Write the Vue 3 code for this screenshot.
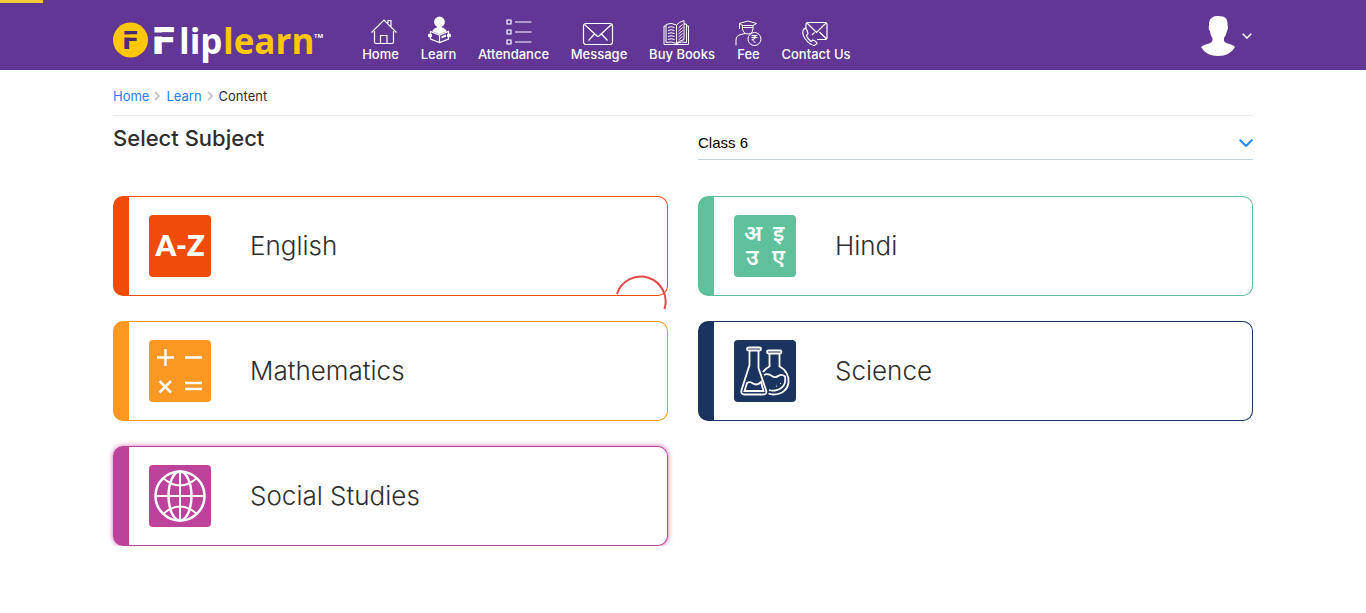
<script setup>
import { ref } from 'vue'

const selectedClass = ref('Class 6')

const subjects = [
  { id: 'english', name: 'English' },
  { id: 'hindi', name: 'Hindi' },
  { id: 'mathematics', name: 'Mathematics' },
  { id: 'science', name: 'Science' },
  { id: 'social', name: 'Social Studies' }
]
</script>

<template>
  <div class="page">
    <div class="progress"></div>
    <header class="header">
      <div class="container header-row">
        <a class="logo" href="#" aria-label="Fliplearn">
          <svg width="210" height="46" viewBox="0 0 210 46">
            <circle cx="17.500" cy="23" r="17.500" fill="#ffc708" />
            <text class="mark" x="9" y="32">F</text>
            <path d="M10 19H26" stroke="#ffc708" stroke-width="3" />
            <text class="initial" x="38" y="37">F</text>
            <path d="M40 17.500H64" stroke="#613694" stroke-width="4" />
            <text class="word white" x="66" y="37">lip</text>
            <text class="word yellow" x="110" y="37">learn</text>
            <text class="tm" x="201" y="21">TM</text>
          </svg>
        </a>

        <nav class="nav">
          <a href="#" class="nav-item">
            <svg class="nav-icon" viewBox="0 0 32 32">
              <path d="M6.500 17.500 19 5 31.500 17.500M9.500 16V27q0 1.500 1.500 1.500H27q1.500 0 1.500-1.500V16M15.500 28V20.500H22V28M23 8V5.500H26V11.500" />
            </svg>
            <span>Home</span>
          </a>
          <a href="#" class="nav-item">
            <svg class="nav-icon" viewBox="0 0 32 32">
              <circle cx="16.500" cy="7" r="4.800" fill="#fff" />
              <path d="M10 16Q12 12.500 16.500 12.500T23 16L16.500 18.500Z" fill="#fff" />
              <path d="M7.500 16.500 16.500 20 25.500 16.500V24L16.500 27.500 7.500 24ZM16.500 20V27" />
              <path d="M18.500 22.500 23 20.500" stroke-width="2" />
              <circle cx="7" cy="20.500" r="1.500" fill="#fff" />
              <circle cx="26" cy="20.500" r="1.500" fill="#fff" />
            </svg>
            <span>Learn</span>
          </a>
          <a href="#" class="nav-item">
            <svg class="nav-icon" viewBox="0 0 32 32">
              <path d="M9 5H13V9H9ZM9 15H13V19H9ZM9 25H13V29H9ZM17 7H33.500M17 17H33.500M17 27H33.500" />
            </svg>
            <span>Attendance</span>
          </a>
          <a href="#" class="nav-item">
            <svg class="nav-icon" viewBox="0 0 32 32">
              <rect x="0.500" y="8.500" width="29" height="21" rx="2.500" />
              <path d="M1.500 9.500 14 21Q15 22 16 21L28.500 9.500M5.500 25.500 11.500 19M24.500 25.500 18.500 19" />
            </svg>
            <span>Message</span>
          </a>
          <a href="#" class="nav-item">
            <svg class="nav-icon thin" viewBox="0 0 32 32">
              <path d="M10.500 10Q5 7 0 9.500V27.500Q5 26 10.500 28.500ZM10.500 10Q13 7 18 5.500V24.500Q13 26 10.500 28.500M0 11H-2V29.500H22.500V11H20.500V27.500Q15 26 10.500 28.500M20.500 11V9H18M2 12.500Q5 11 8.500 12.500M2 15.500Q5 14 8.500 15.500M2 18.500Q5 17 8.500 18.500M2 21.500Q5 20 8.500 21.500M2 24.500Q5 23 8.500 24.500M12.500 13 16.500 9.500M12.500 16 16.500 12.500M12.500 19 16.500 15.500M12.500 22 16.500 18.500M12.500 25 16.500 21.500" />
            </svg>
            <span>Buy Books</span>
          </a>
          <a href="#" class="nav-item">
            <svg class="nav-icon thin" viewBox="0 0 32 32">
              <path d="M6 8.500 15 6 23.500 8.500 20 10.500H10ZM6.500 9V14M9.500 10.500V14Q10.500 19 15 19T20 14V10.500M3 30.500V25Q3 20.500 8 19.500L12 18.500M10 12.500H20" />
              <circle cx="21.500" cy="24" r="6.500" />
              <path d="M18.500 20.500H24.500M18.500 22.500H24.500M19 20.500Q23 20.500 22.500 22.500 22 24.500 19 24.500L22.500 28" />
            </svg>
            <span>Fee</span>
          </a>
          <a href="#" class="nav-item">
            <svg class="nav-icon" viewBox="0 0 32 32">
              <path d="M6 13V9.500Q6 7.500 8 7.500H25Q27 7.500 27 9.500V22.500Q27 24.500 25 24.500H17M7 8 16.500 17.500 26 8M26 23.500 19.500 17M12 20 14.500 17.500" />
              <path d="M3.500 14.500Q1.500 18 5 23.500 9.500 30 14.500 30.500L17 28.500Q17 27 13 25L11 26.500Q7.500 24 6.500 20.500L8 18.500Q7 14.500 5.500 13Z" />
            </svg>
            <span>Contact Us</span>
          </a>
        </nav>

        <button class="profile" type="button" aria-label="Profile">
          <svg width="34" height="40" viewBox="0 0 34 40">
            <path d="M12 1Q14-.5 22 .5 27 2 26.500 9 27.500 12 26 15 25 20 23 22V25Q24 27 30 28.500 33 29.500 34 31 29 40 17 40T0 31Q2 29 6 28 11 27 11.500 24V22Q9.500 20 9 15 7 13 8 10 7.500 3 12 1Z" fill="#fff" />
          </svg>
          <svg width="10" height="6" viewBox="0 0 10 6">
            <path d="M.7.700 5 5 9.300.700" fill="none" stroke="#fff" stroke-width="1.600" />
          </svg>
        </button>
      </div>
    </header>

    <main class="container">
      <nav class="crumbs" aria-label="Breadcrumb">
        <a href="#">Home</a>
        <svg width="7" height="10" viewBox="0 0 7 10"><path d="M1 1 5 5 1 9" /></svg>
        <a href="#">Learn</a>
        <svg width="7" height="10" viewBox="0 0 7 10"><path d="M1 1 5 5 1 9" /></svg>
        <span>Content</span>
      </nav>

      <div class="title-row">
        <h1>Select Subject</h1>
        <div class="picker">
          <select v-model="selectedClass" aria-label="Class">
            <option>Class 6</option>
          </select>
          <svg width="14" height="8" viewBox="0 0 14 8">
            <path d="M.7.700 7 7 13.300.700" fill="none" stroke="#1e88f5" stroke-width="2" />
          </svg>
        </div>
      </div>

      <div class="cards">
        <a v-for="s in subjects" :key="s.id" href="#" class="card" :class="s.id">
          <svg class="tile" viewBox="0 0 62 62">
            <text v-if="s.id === 'english'" class="az" x="31" y="41" text-anchor="middle">A-Z</text>
            <g v-else-if="s.id === 'hindi'" class="deva">
              <text x="10" y="26">अ</text>
              <text x="39" y="26">इ</text>
              <text x="12" y="50">उ</text>
              <text x="38" y="50">ए</text>
            </g>
            <path v-else-if="s.id === 'mathematics'" d="M8 17.500H25M16.500 9V26M36 17.500H53M10.500 41 22 52.500M22 41 10.500 52.500M36 43H53M36 49H53" stroke-width="2.500" />
            <g v-else-if="s.id === 'science'" stroke-width="1.800">
              <rect x="13" y="7.500" width="14" height="3" rx="1.500" />
              <path d="M15.500 11V25L7.500 50Q6.500 54.500 10.500 54.500H29Q33.500 54.500 32 50L24.500 28V11M10.500 51 13 43Q16 41 19 43.500 23 46 27 42L29.500 51Z" />
              <rect x="33" y="10.500" width="14.500" height="3" rx="1.500" />
              <path d="M35.500 14V26.500Q31 28.500 29 32M45.500 14V26.500C59 33 58 54 39.500 54.500Q37 54.500 34.500 53.500M30 35Q34 33 38 36 41 38.500 45 35.500 48 34 51 36.500 53 48 41 50.500 37 51 35 50" />
              <path d="M42 46h1M46 43.500h1M45.500 49h1" stroke-width="1.200" />
            </g>
            <g v-else stroke-width="2.500">
              <circle cx="31" cy="31" r="24.500" />
              <ellipse cx="31" cy="31" rx="11.500" ry="24.500" />
              <path d="M31 6V56M6 31H56M14 13Q31 28 48 13M14 49Q31 34 48 49" stroke-width="2" />
            </g>
          </svg>
          <span class="name">{{ s.name }}</span>
        </a>
      </div>
    </main>

    <svg class="spinner" width="52" height="52" viewBox="0 0 52 52" role="status" aria-label="Loading">
      <path d="M2 19A24.500 24.500 0 0 1 49.500 34" fill="none" stroke="#e5474b" stroke-width="2" />
    </svg>
  </div>
</template>

<style>
body {
  background: #fff;
}
</style>

<style scoped>
.page {
  position: relative;
  font-family: Inter, Lato, sans-serif;
  color: #2e2e2e;
}

.page * {
  box-sizing: border-box;
}

a {
  text-decoration: none;
}

.container {
  max-width: 1170px;
  margin: 0 auto;
  padding: 0 15px;
}

.progress {
  position: absolute;
  top: 0;
  left: 0;
  width: 43px;
  height: 3px;
  background: #f8c93a;
}

.header {
  background: #613694;
}

.header-row {
  display: flex;
  height: 70px;
}

.logo {
  width: 210px;
  margin: 17px 40px 0 0;
  flex: none;
}

.logo svg,
.nav-icon {
  display: block;
  overflow: visible;
}

.mark {
  font: 700 25px "DejaVu Sans", sans-serif;
  fill: #4d2b72;
}

.initial {
  font: 700 38px "DejaVu Sans", sans-serif;
  fill: #fff;
}

.word {
  font: 700 35px "Open Sans", sans-serif;
}

.white {
  fill: #fff;
}

.yellow {
  fill: #ffc708;
}

.tm {
  font: 700 6px "Open Sans", sans-serif;
  fill: #fff;
}

.nav {
  display: grid;
  grid-template-columns: 37px 35px 71px 56px 66px 23px 68px;
  column-gap: 22px;
  margin-left: -1px;
  padding-top: 15px;
}

.nav-item {
  display: flex;
  flex-direction: column;
  align-items: center;
  color: #fff;
  font-size: 13px;
  font-weight: 500;
  line-height: 15px;
  white-space: nowrap;
}

.nav-icon {
  width: 32px;
  height: 32px;
  flex: none;
  fill: none;
  stroke: #fff;
  stroke-width: 1.2;
}

.thin {
  stroke-width: 1;
}

.profile {
  display: flex;
  align-items: center;
  gap: 7px;
  height: 40px;
  margin: 16px 0 0 auto;
  padding: 0 1px 0 0;
  border: 0;
  background: none;
}

.crumbs {
  display: flex;
  align-items: center;
  gap: 5px;
  height: 46px;
  padding-top: 7px;
  border-bottom: 1px solid #ebebeb;
  font-size: 13px;
}

.crumbs a {
  color: #2680f5;
}

.crumbs path {
  fill: none;
  stroke: #c8c8c8;
  stroke-width: 2;
}

.title-row {
  display: grid;
  grid-template-columns: 1fr 1fr;
  column-gap: 30px;
}

h1 {
  margin: 7px 0 0;
  font-size: 22px;
  font-weight: 500;
  line-height: 30px;
}

.picker {
  display: flex;
  align-items: center;
  height: 34px;
  margin-top: 10px;
  border-bottom: 1px solid #c5d3de;
}

.picker select {
  flex: 1;
  padding: 0;
  border: 0;
  background: none;
  appearance: none;
  color: #000;
  font: 15px "Liberation Sans", Arial, sans-serif;
}

.cards {
  display: grid;
  grid-template-columns: 1fr 1fr;
  gap: 25px 30px;
  margin-top: 36px;
}

.card {
  display: flex;
  align-items: center;
  height: 100px;
  padding-left: 20px;
  border: 1px solid var(--tone);
  border-left-width: 16px;
  border-radius: 10px;
  color: #2e2e2e;
}

.english {
  --tone: #ee4c08;
}

.hindi {
  --tone: #5fc19c;
}

.mathematics {
  --tone: #fb9823;
}

.science {
  --tone: #1a335f;
}

.social {
  --tone: #bc429b;
  box-shadow: 0 0 5px rgba(188, 66, 155, 0.8);
}

.tile {
  width: 62px;
  height: 62px;
  margin-right: 39px;
  border-radius: 4px;
  background: var(--tone);
  fill: none;
  stroke: #fff;
}

.tile text {
  fill: #fff;
  stroke: none;
}

.az {
  font: 800 29px Lato, sans-serif;
}

.deva {
  font: 600 22px "Noto Sans Devanagari", "Noto Sans", sans-serif;
}

.name {
  font-size: 26px;
  font-weight: 300;
  line-height: 34px;
}

.spinner {
  position: absolute;
  top: 275px;
  left: calc(50% - 68px);
}
</style>
